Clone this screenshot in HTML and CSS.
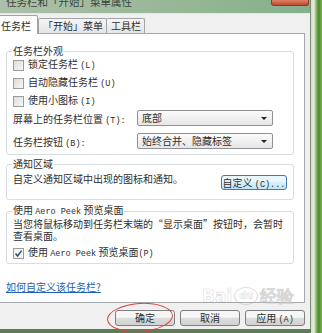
FILE: index.html
```html
<!doctype html>
<html>

<head>
<meta charset="utf-8">
<title>
任务栏和「开始」菜单属性
</title>
<link rel="stylesheet" href="styles.css">
</head>

<body>

<div class="window">

<div class="titlebar">
<div class="title">任务栏和「开始」菜单属性</div>
<div class="close"></div>
</div>

<div class="frame">

<div class="tabs">
<div class="tab tab-selected">任务栏</div>
<div class="tab">「开始」菜单</div>
<div class="tab">工具栏</div>
</div>

<div class="panel">

<fieldset class="group group-looks">
<legend>任务栏外观</legend>
<div class="check-row"><span class="check"></span><span class="label">锁定任务栏 <span class="key">(L)</span></span></div>
<div class="check-row"><span class="check"></span><span class="label">自动隐藏任务栏 <span class="key">(U)</span></span></div>
<div class="check-row"><span class="check"></span><span class="label">使用小图标 <span class="key">(I)</span></span></div>
<div class="select-row">
<div class="select-label">屏幕上的任务栏位置 <span class="key">(T):</span></div>
<div class="select"><span>底部</span><span class="arrow"></span></div>
</div>
<div class="select-row select-row-next">
<div class="select-label">任务栏按钮 <span class="key">(B):</span></div>
<div class="select"><span>始终合并、隐藏标签</span><span class="arrow"></span></div>
</div>
</fieldset>

<fieldset class="group group-notify">
<legend>通知区域</legend>
<div class="notify-row">
<div class="notify-text">自定义通知区域中出现的图标和通知。</div>
<div class="button button-focus">自定义 <span class="key">(C)...</span></div>
</div>
</fieldset>

<fieldset class="group group-peek">
<legend>使用 <span class="en">Aero Peek</span> 预览桌面</legend>
<div class="peek-text">当您将鼠标移动到任务栏末端的“显示桌面”按钮时，会暂时<br>查看桌面。</div>
<div class="check-row check-row-peek"><span class="check check-on"><svg width="9" height="9" viewBox="0 0 9 9"><path d="M1.5 4.5 L3.6 7 L7.6 1.6" fill="none" stroke="#2b4a7a" stroke-width="1.4"/></svg></span><span class="label">使用 <span class="en">Aero Peek</span> 预览桌面<span class="key">(P)</span></span></div>
</fieldset>

<div class="help-link">如何自定义该任务栏?</div>

</div>

<div class="buttons">
<div class="button">确定</div>
<div class="button">取消</div>
<div class="button">应用 <span class="key">(A)</span></div>
</div>

</div>
</div>

<div class="edge"></div>

<!-- watermark and the hand-drawn ring lie over the dialog -->
<div class="watermark">Bai<span class="paw">du</span>经验</div>
<div class="ring"></div>

</body>
</html>
```

FILE: styles.css
```css
body {
	margin: 0;
	width: 322px;
	height: 333px;
	overflow: hidden;
	display: flex;
	background: #5e7c58;
	font-family: "Noto Sans CJK SC", sans-serif;
	font-size: 10px;
	color: #2e2e2e;
	position: relative;
}

div.window {
	width: 310px;
	height: 329px;
	border-right: 1px solid #7e8c7c;
	display: flex;
	flex-direction: column;
	background: #f0f0f0;
}

div.titlebar {
	height: 13px;
	border-bottom: 1px solid #e3e8e2;
	display: flex;
	background: linear-gradient(to right, #adbfa9, #98b797 55%, #84b08a);
	overflow: hidden;
}

div.title {
	margin-top: -4px;
	margin-left: 6px;
	font-size: 10.5px;
	line-height: 12px;
	color: #3a4438;
}

div.close {
	margin-left: auto;
	margin-right: 1px;
	width: 36px;
	height: 5px;
	border-radius: 0 0 3px 3px;
	background: linear-gradient(#d98468, #c4462c);
	border: 1px solid #8e3a2a;
	border-top: none;
}

div.frame {
	flex: 1;
	display: flex;
	flex-direction: column;
}

div.tabs {
	height: 19px;
	margin-left: -4px;
	display: flex;
	align-items: flex-end;
}

div.tab {
	height: 14px;
	line-height: 14px;
	padding: 0 3px 0 4px;
	border: 1px solid #a0a4a8;
	border-bottom: none;
	border-radius: 2px 2px 0 0;
	background: linear-gradient(#f6f6f6, #e4e4e4);
	margin-right: -1px;
}

div.tab-selected {
	height: 18px;
	line-height: 20px;
	padding: 0 6px 0 4px;
	margin-bottom: -1px;
	margin-right: 0;
	background: #ffffff;
	position: relative;
	z-index: 1;
}

div.panel {
	box-sizing: border-box;
	height: 270px;
	margin-left: -4px;
	margin-right: 5px;
	border: 1px solid #a6aaae;
	background: #ffffff;
	padding: 0 10px 0 9px;
	display: flex;
	flex-direction: column;
}

fieldset.group {
	margin: 0;
	padding: 0 6px;
	border: 1px solid #d8dde2;
	border-radius: 3px;
	min-width: 0;
}

fieldset.group legend {
	padding: 0 1px;
	margin-left: -1px;
	line-height: 10px;
}

fieldset.group-looks {
	margin-top: 12px;
	padding-bottom: 5px;
}

fieldset.group-notify {
	margin-top: 4px;
	padding-bottom: 9px;
}

fieldset.group-peek {
	margin-top: 5px;
	padding-bottom: 1px;
}

div.check-row {
	height: 18px;
	display: flex;
	align-items: center;
	white-space: nowrap;
}

span.label {
	line-height: 12px;
}

span.check {
	width: 9px;
	height: 9px;
	margin-right: 4px;
	border: 1px solid #9a9c9e;
	background: linear-gradient(135deg, #dcdcdc, #f8f8f8);
	display: flex;
}

span.check-on {
	background: #f4f4f4;
}

span.key, span.en {
	font-family: "Liberation Mono", monospace;
	font-size: 8.5px;
}

div.select-row {
	height: 16px;
	display: flex;
	align-items: center;
}

div.select-row-next {
	margin-top: 7px;
}

div.select-label {
	width: 124px;
	white-space: nowrap;
}

div.select {
	box-sizing: border-box;
	width: 136px;
	height: 16px;
	line-height: 14px;
	padding-left: 4px;
	border: 1px solid #8f9194;
	border-radius: 2px;
	background: linear-gradient(#fbfbfb, #e6e6e6);
	display: flex;
	align-items: center;
}

span.arrow {
	margin-left: auto;
	margin-right: 5px;
	border-left: 3px solid transparent;
	border-right: 3px solid transparent;
	border-top: 3px solid #222222;
}

div.notify-row {
	display: flex;
	align-items: flex-start;
}

div.notify-text {
	margin-top: 5px;
	line-height: 10px;
	white-space: nowrap;
}

div.button {
	box-sizing: border-box;
	height: 16px;
	line-height: 14px;
	border: 1px solid #7c7e80;
	border-radius: 3px;
	background: linear-gradient(#f6f6f6 45%, #dddddd 50%, #d2d2d2);
	text-align: center;
}

div.button-focus {
	margin-top: 6px;
	margin-left: auto;
	width: 66px;
	height: 15px;
	line-height: 13px;
	border-color: #3d7bad;
	background: linear-gradient(#eaf6fd 45%, #d9f0fc 50%, #bee6fd);
}

div.peek-text {
	padding-top: 1px;
	line-height: 12px;
	white-space: nowrap;
}

div.check-row-peek {
	margin-top: 2px;
}

div.help-link {
	margin-top: 18px;
	line-height: 10px;
	color: #2161ad;
	text-decoration: underline;
}

div.buttons {
	margin-top: 7px;
	margin-right: 5px;
	display: flex;
	justify-content: flex-end;
	gap: 5px;
}

div.buttons div.button {
	width: 60px;
}

div.edge {
	flex: 1;
	height: 333px;
	background: linear-gradient(to right, #cfe0c0 0, #e3eed8 3px, #6fa04a 6px, #4d8a2e 8px, #7db457 11px);
}

div.watermark {
	position: absolute;
	left: 202px;
	top: 287px;
	font-family: "DejaVu Sans", sans-serif;
	font-size: 17px;
	font-weight: bold;
	line-height: 18px;
	color: rgba(255, 255, 255, 0.55);
	-webkit-text-stroke: 0.6px rgba(140, 140, 140, 0.35);
	display: flex;
	align-items: center;
}

span.paw {
	margin: 0 2px;
	font-size: 10px;
	width: 22px;
	height: 16px;
	border-radius: 50%;
	border: 1px solid rgba(150, 150, 150, 0.35);
	display: flex;
	justify-content: center;
	align-items: center;
}

div.ring {
	position: absolute;
	left: 107px;
	top: 303px;
	width: 64px;
	height: 27px;
	border: 1.5px solid #d4443e;
	border-radius: 50%;
	transform: rotate(-4deg);
}
```
